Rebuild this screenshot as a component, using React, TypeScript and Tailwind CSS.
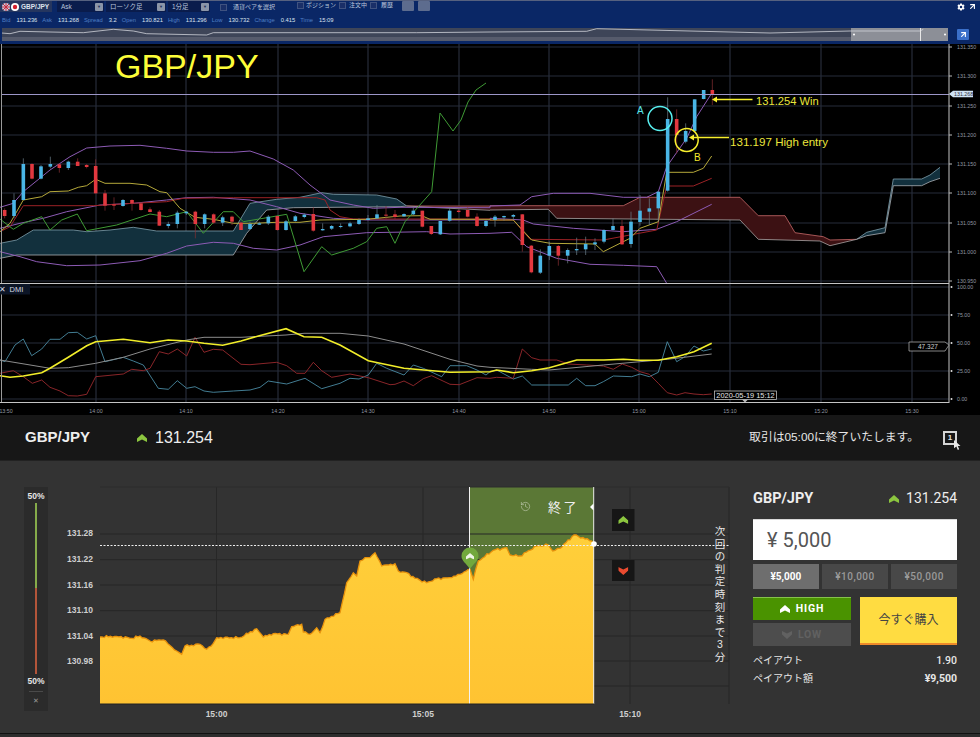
import { ArrowUpRight, History } from 'lucide-react';
import { IoSettingsSharp } from 'react-icons/io5';

const FONT = "font-['Liberation_Sans','Noto_Sans_CJK_JP',sans-serif]";

// traced points are in crop coords (3x), ox/oy put them back on the page
const toPage = (pts: number[], ox: number, oy: number) => {
  const out: string[] = [];
  for (let i = 0; i < pts.length; i += 2) {
    out.push(`${(pts[i] / 3 + ox).toFixed(1)},${(pts[i + 1] / 3 + oy).toFixed(1)}`);
  }
  return out;
};
const LEFT = (pts: number[]) => toPage(pts, 0, 120);
const RIGHT = (pts: number[]) => toPage(pts, 490, 70);
const DL = (pts: number[]) => toPage(pts, 0, 280);
const DR = (pts: number[]) => toPage(pts, 490, 280);

const PRICE_LINES: { color: string; width?: number; pts: string[] }[] = [
  {
    color: '#8d5bb5',
    pts: [
      ...LEFT([0, 262, 40, 250, 70, 215, 150, 150, 210, 110, 260, 84, 330, 78, 420, 76, 500, 85, 560, 93, 640, 97, 700, 97, 750, 93, 820, 117, 880, 150, 930, 195, 990, 240, 1060, 255, 1120, 265, 1200, 262, 1470, 263]),
      ...RIGHT([0, 408, 90, 405, 125, 380, 190, 370, 300, 370, 400, 382, 470, 382, 505, 365, 530, 290, 590, 205, 620, 140, 665, 70]),
    ],
  },
  {
    color: '#8d5bb5',
    pts: [
      ...LEFT([0, 325, 60, 310, 130, 295, 200, 275, 300, 255, 400, 250, 500, 240, 560, 233, 640, 232, 750, 240, 830, 260, 900, 280, 1000, 295, 1100, 300, 1470, 300]),
      ...RIGHT([0, 445, 100, 450, 130, 462, 250, 475, 400, 485, 500, 478, 560, 455, 665, 403]),
    ],
  },
  {
    color: '#8d5bb5',
    pts: [
      ...LEFT([0, 395, 60, 410, 110, 425, 200, 437, 300, 435, 420, 422, 500, 400, 560, 378, 640, 367, 700, 370, 760, 385, 830, 390, 900, 375, 970, 350, 1100, 338, 1280, 335, 1350, 342, 1470, 340]),
      ...RIGHT([0, 490, 65, 487, 110, 530, 200, 565, 300, 583, 400, 586, 500, 590, 530, 640]),
    ],
  },
  {
    color: '#9c2226',
    pts: [
      ...LEFT([0, 335, 30, 320, 70, 257, 280, 257, 400, 250, 500, 245, 550, 235, 700, 233, 950, 233, 975, 240, 990, 270, 1020, 290, 1060, 297, 1470, 297]),
      ...RIGHT([0, 450, 70, 450, 120, 508, 340, 510, 500, 480, 530, 348, 610, 348, 665, 325]),
    ],
  },
  {
    color: '#b5a83a',
    pts: [
      ...LEFT([0, 335, 30, 310, 70, 240, 125, 230, 150, 215, 205, 213, 235, 202, 260, 197, 287, 178, 315, 190, 390, 190, 440, 195, 480, 215, 500, 218, 540, 265, 585, 292, 640, 298, 700, 310, 760, 310, 830, 307, 900, 307, 960, 300, 1100, 298, 1200, 288, 1265, 287, 1290, 298, 1470, 298]),
      ...RIGHT([0, 450, 70, 450, 125, 510, 180, 520, 315, 522, 340, 545, 420, 505, 450, 475, 505, 455, 530, 307, 610, 307, 640, 295, 665, 258]),
    ],
  },
  {
    color: '#3f9a35',
    pts: [
      ...LEFT([0, 297, 40, 328, 70, 310, 125, 290, 150, 330, 185, 300, 232, 282, 260, 332, 350, 315, 450, 282, 500, 290, 560, 275, 610, 340, 670, 275, 700, 275, 730, 305, 860, 283, 912, 455, 965, 380, 995, 405, 1060, 385, 1100, 365, 1130, 325, 1160, 320, 1185, 370, 1215, 305, 1295, 215]),
      '440,113',
      '453,131',
      '461,120',
      '468,102',
      '476,90',
      '486,83',
    ],
  },
];

const TEAL_TOP = [0, 370, 50, 360, 100, 330, 220, 330, 260, 335, 330, 330, 400, 322, 470, 333, 700, 333, 750, 250, 830, 238, 900, 232, 965, 218, 1000, 223, 1130, 225, 1190, 237, 1220, 258];
const TEAL_BOTTOM = [1220, 258, 1200, 260, 880, 263, 800, 270, 740, 340, 700, 405, 50, 405, 0, 415];
const RED_TOP = [0, 407, 400, 407, 450, 382, 750, 382, 805, 437, 885, 437, 915, 488, 1000, 500, 1020, 510, 1100, 508];
const RED_BOTTOM = [1100, 508, 1020, 527, 990, 513, 805, 508, 750, 450, 200, 445, 175, 418, 0, 420];
const TEAL2_TOP = [1100, 508, 1130, 487, 1185, 473, 1210, 327, 1295, 327, 1320, 315, 1350, 292];
const TEAL2_BOTTOM = [1350, 325, 1320, 335, 1295, 347, 1210, 347, 1185, 488, 1130, 497, 1100, 508];
// thin start of the red cloud, before the right hand crop begins
const RED_START_TOP = [1220, 258, 1470, 258];
const RED_START_BOTTOM = [1470, 271, 1290, 262, 1220, 258];

// x, wickTop, wickBottom, bodyTop, bodyBottom, up
type Candle = [number, number, number, number, number, boolean];
const CANDLES_L: Candle[] = [
  [14, 265, 295, 270, 288, false], [42, 220, 295, 240, 288, true], [70, 115, 240, 132, 240, true], [96, 130, 178, 132, 176, false],
  [123, 135, 178, 139, 176, true], [151, 110, 145, 132, 140, true], [178, 130, 158, 133, 144, false], [205, 122, 150, 125, 144, true],
  [233, 115, 138, 125, 138, false], [260, 132, 145, 135, 141, false], [287, 118, 220, 138, 220, false], [315, 210, 272, 220, 257, false],
  [342, 232, 270, 253, 257, false], [369, 237, 260, 240, 258, true], [396, 238, 272, 240, 250, false], [423, 248, 272, 250, 270, false],
  [450, 262, 277, 268, 276, false], [478, 270, 318, 275, 317, false], [505, 305, 325, 312, 318, true], [532, 272, 325, 278, 312, true],
  [559, 275, 285, 275, 280, true], [586, 272, 355, 275, 312, false], [614, 280, 325, 283, 312, true], [641, 280, 312, 283, 308, false],
  [668, 287, 318, 292, 308, true], [696, 287, 315, 290, 305, false], [723, 305, 330, 308, 330, false], [750, 305, 330, 312, 327, true],
  [778, 305, 315, 310, 314, true], [805, 285, 315, 290, 310, true], [832, 288, 332, 288, 330, false], [858, 300, 332, 304, 330, true],
  [886, 285, 305, 289, 303, true], [913, 280, 295, 284, 291, true], [940, 262, 335, 282, 332, false], [968, 310, 332, 327, 331, true],
  [995, 315, 330, 318, 326, true], [1022, 310, 325, 318, 320, true], [1050, 305, 322, 310, 319, true], [1077, 295, 315, 300, 312, true],
  [1104, 285, 300, 295, 300, true], [1131, 255, 297, 283, 295, true], [1158, 258, 297, 284, 286, false], [1185, 270, 298, 283, 291, false],
  [1212, 280, 290, 282, 289, true], [1240, 262, 285, 272, 283, true], [1267, 272, 322, 272, 320, false], [1294, 318, 345, 318, 342, false],
  [1321, 303, 345, 303, 343, true], [1349, 262, 305, 272, 302, true], [1376, 268, 278, 272, 276, false], [1403, 262, 292, 270, 290, false],
  [1431, 280, 320, 290, 318, false], [1458, 300, 322, 303, 318, true],
];
const CANDLES_R: Candle[] = [
  [15, 435, 470, 440, 450, true], [42, 437, 452, 438, 442, true], [70, 432, 450, 435, 440, true], [97, 432, 545, 433, 525, false],
  [124, 525, 610, 527, 607, false], [151, 538, 612, 557, 608, true], [178, 515, 570, 528, 557, true], [205, 525, 587, 528, 557, false],
  [233, 535, 580, 540, 557, true], [260, 503, 555, 537, 541, true], [287, 500, 555, 522, 538, true], [315, 505, 540, 517, 523, true],
  [342, 478, 520, 480, 515, true], [369, 445, 482, 468, 480, true], [396, 450, 525, 468, 523, false], [423, 425, 533, 455, 522, true],
  [450, 375, 467, 422, 456, true], [478, 385, 465, 415, 425, true], [505, 365, 455, 365, 415, true], [533, 82, 365, 147, 362, true],
  [560, 118, 250, 147, 195, false], [587, 160, 220, 183, 215, true], [614, 88, 185, 88, 183, true], [641, 60, 88, 60, 87, true],
  [667, 28, 105, 60, 72, false],
];

const DMI_LINES: { color: string; width: number; pts: string[] }[] = [
  {
    color: '#4a8aa3',
    width: 0.9,
    pts: [
      ...DL([0, 240, 15, 245, 45, 195, 70, 177, 95, 227, 125, 207, 150, 178, 180, 178, 205, 158, 232, 157, 260, 177, 287, 167, 315, 245, 370, 232, 400, 243, 430, 255, 475, 325, 505, 328, 532, 302, 560, 325, 585, 320, 612, 333, 640, 337, 700, 333, 750, 330, 780, 322, 805, 303, 860, 312, 915, 295, 965, 326, 1020, 310, 1050, 295, 1077, 297, 1105, 285, 1130, 250, 1160, 265, 1212, 285, 1240, 255, 1270, 265, 1325, 290, 1350, 257, 1400, 257, 1431, 270, 1458, 285, 1470, 275]),
      ...DR([20, 270, 70, 297, 97, 288, 125, 315, 235, 315, 260, 295, 287, 317, 315, 317, 340, 305, 370, 288, 425, 290, 450, 282, 478, 290, 505, 277, 532, 185, 560, 245, 585, 230, 612, 198, 640, 213, 665, 207]),
    ],
  },
  {
    color: '#98292e',
    width: 0.9,
    pts: [
      ...DL([0, 280, 40, 272, 70, 290, 97, 310, 125, 300, 150, 322, 180, 333, 205, 347, 232, 348, 260, 343, 287, 290, 370, 282, 395, 268, 430, 272, 450, 265, 478, 215, 505, 222, 532, 207, 560, 228, 585, 172, 612, 217, 640, 208, 668, 210, 696, 232, 723, 253, 750, 254, 830, 247, 860, 257, 890, 280, 915, 280, 940, 247, 965, 272, 995, 292, 1050, 282, 1105, 293, 1170, 314, 1185, 313, 1212, 303, 1240, 317, 1270, 296, 1295, 287, 1350, 313, 1378, 314, 1431, 293, 1470, 295]),
      ...DR([20, 292, 70, 295, 97, 207, 125, 233, 150, 240, 200, 240, 235, 252, 290, 255, 340, 258, 370, 268, 397, 252, 425, 262, 450, 275, 478, 283, 505, 310, 532, 338, 560, 345, 585, 338, 612, 342, 640, 344, 665, 342]),
    ],
  },
  {
    color: '#8c8c8c',
    width: 1,
    pts: [
      ...DL([0, 240, 60, 250, 150, 265, 205, 263, 287, 250, 370, 232, 450, 207, 560, 180, 612, 172, 723, 172, 858, 165, 912, 160, 1020, 160, 1105, 168, 1212, 192, 1350, 238, 1431, 258, 1470, 262]),
      ...DR([125, 268, 178, 270, 340, 255, 450, 245, 532, 238, 665, 222]),
    ],
  },
  {
    color: '#f2ee2a',
    width: 1.6,
    pts: [
      ...DL([0, 287, 30, 292, 70, 288, 125, 278, 150, 265, 205, 232, 260, 197, 287, 185, 370, 178, 450, 188, 505, 180, 560, 183, 612, 190, 668, 196, 723, 183, 778, 167, 858, 146, 912, 170, 965, 172, 1020, 195, 1105, 242, 1212, 265, 1350, 277, 1470, 275]),
      ...DR([20, 270, 70, 278, 125, 272, 178, 263, 260, 240, 342, 240, 400, 238, 450, 241, 505, 241, 560, 230, 612, 215, 665, 190]),
    ],
  },
];

const AREA_TRACE = [
  ...toPage([300, 528, 350, 526, 395, 532, 420, 525, 450, 540, 490, 537, 530, 570, 545, 580, 555, 555, 600, 550, 620, 565, 640, 547, 650, 530, 720, 530, 770, 503, 790, 528, 820, 518, 865, 520, 875, 497, 905, 490, 910, 513, 930, 520, 950, 500, 960, 515, 975, 475, 1020, 455, 1040, 365, 1060, 335, 1070, 345, 1080, 300, 1095, 290, 1110, 290], 0, 460),
  ...toPage([15, 245, 35, 285, 75, 278, 85, 300, 110, 305, 135, 322, 170, 335, 200, 323, 245, 320, 270, 310, 300, 295, 310, 325, 325, 270, 370, 238, 410, 230, 420, 252, 450, 255, 500, 225, 535, 222, 548, 240, 570, 232, 612, 192, 665, 210, 672, 218], 370, 470),
];

// the tick line is jagged, so roughen the trace a little between its points
const roughen = (trace: string[]) => {
  const pairs = trace.map((p) => p.split(',').map(Number));
  const out: string[] = [];
  pairs.forEach(([x, y], i) => {
    out.push(`${x},${y}`);
    const next = pairs[i + 1];
    if (!next) return;
    const steps = Math.floor((next[0] - x) / 2);
    for (let s = 1; s < steps; s++) {
      const t = s / steps;
      const px = x + (next[0] - x) * t;
      const wobble = Math.sin(px * 1.7) * 0.7 + Math.sin(px * 0.63) * 0.5;
      out.push(`${px.toFixed(1)},${(y + (next[1] - y) * t + wobble).toFixed(1)}`);
    }
  });
  return out;
};
const AREA = roughen(AREA_TRACE);

const GRID_X = [96, 186, 278, 368, 459, 549, 639, 730, 821, 912];
const PRICE_TICKS: [number, string][] = [
  [47, '131.350'], [76, '131.300'], [106, '131.250'], [135, '131.200'], [164, '131.150'], [193, '131.100'], [223, '131.050'], [252, '131.000'], [281, '130.950'],
];
const DMI_TICKS: [number, string][] = [[287, '100.00'], [315, '75.00'], [343, '50.00'], [371, '25.00'], [399, '0.00']];
const TIME_TICKS: [number, string][] = [
  [6, '13:50'], [96, '14:00'], [186, '14:10'], [278, '14:20'], [368, '14:30'], [459, '14:40'], [549, '14:50'], [639, '15:00'], [730, '15:10'], [821, '15:20'], [912, '15:30'],
];

const STATS: [string, string][] = [
  ['Bid', '131.236'], ['Ask', '131.268'], ['Spread', '3.2'], ['Open', '130.821'], ['High', '131.296'], ['Low', '130.732'], ['Change', '0.415'], ['Time', '15:09'],
];

function Chevron({ up, color, width, className, x, y }: { up: boolean; color: string; width: number; className?: string; x?: number; y?: number }) {
  return (
    <svg x={x} y={y} width={width} height={width * 0.8} viewBox="0 0 10 8" className={className}>
      <polygon points={up ? '0,8 0,4.5 5,0 10,4.5 10,8 5,5.5' : '0,0 0,3.5 5,8 10,3.5 10,0 5,2.5'} fill={color} />
    </svg>
  );
}

function SelectBox({ label, width }: { label: string; width: string }) {
  return (
    <div className={`flex h-[11px] items-center justify-between bg-[#0a1c4c] pl-[4px] pr-[1px] text-[6.5px] text-[#b9c4da] ${width}`}>
      <span>{label}</span>
      <span className="flex h-[8px] w-[8px] items-center justify-center rounded-[1px] bg-[#8b95a8] text-[4px] leading-none text-[#1a2a55]">▼</span>
    </div>
  );
}

function CheckLabel({ label, className }: { label: string; className?: string }) {
  return (
    <div className={`flex items-center ${className ?? ''}`}>
      <span className="h-[7px] w-[7px] shrink-0 border border-[#3f5280] bg-[#1a2f68]" />
      <span className="text-[6px] leading-[8px] text-[#b9c4da]">{label}</span>
    </div>
  );
}

function Toolbar() {
  return (
    <div className="h-[44px] bg-[#0a2766]">
      <div className="flex h-[13px] items-start border-t border-[#56617f]">
        <div className="flex h-[11px] w-[52px] items-center gap-[1px] bg-[#25365f] pl-[2px]">
          <svg width="8" height="8" viewBox="0 0 8 8">
            <circle cx="4" cy="4" r="4" fill="#c9cfe0" />
            <path d="M1 1 7 7M7 1 1 7M4 0v8M0 4h8" stroke="#c8283c" strokeWidth="1" />
          </svg>
          <svg width="8" height="8" viewBox="0 0 8 8">
            <circle cx="4" cy="4" r="4" fill="#fff" />
            <circle cx="4" cy="4" r="2.2" fill="#d31f2f" />
          </svg>
          <span className="ml-[1px] text-[6.5px] font-bold text-[#dfe4ee]">GBP/JPY</span>
        </div>
        <div className="ml-[5px] flex gap-[2px]">
          <SelectBox label="Ask" width="w-[47px]" />
          <SelectBox label="ローソク足" width="w-[60px]" />
          <SelectBox label="1分足" width="w-[42px]" />
        </div>
        <CheckLabel label="通貨ペアを選択" className="ml-[10px] mt-[2px] gap-[6px]" />
        <CheckLabel label="ポジション" className="ml-[22px] gap-[2px]" />
        <CheckLabel label="注文中" className="ml-[3px] gap-[3px]" />
        <CheckLabel label="履歴" className="ml-[3px] gap-[4px]" />
        <span className="ml-[9px] h-[10px] w-[12px] rounded-[1px] bg-[#5d6c8e]" />
        <span className="ml-[4px] h-[10px] w-[12px] rounded-[1px] bg-[#5d6c8e]" />
        <div className="ml-auto mr-[3px] flex items-center gap-[3px] pt-[1px] text-white">
          <IoSettingsSharp size={8} />
          <ArrowUpRight size={9} strokeWidth={3} />
        </div>
      </div>
      <div className="flex h-[15px] items-center gap-[5px] pl-[2px] text-[5.8px] leading-none">
        {STATS.map(([name, value]) => (
          <div key={name} className="flex gap-[6px]">
            <span className="text-[#4f7fc4]">{name}</span>
            <span className="text-[#dde3ee]">{value}</span>
          </div>
        ))}
      </div>
      <div className="flex items-center pl-[2px]">
        <svg width="946" height="13" viewBox="0 0 946 13" className="block">
          <rect width="946" height="13" fill="#3e4558" />
          <rect y="9" width="946" height="4" fill="#565b6c" />
          <rect x="849" width="97" height="13" fill="#8c8f97" />
          <polyline
            fill="none"
            stroke="#d0d3da"
            strokeWidth="0.8"
            points={toPage([5, 15, 30, 17, 60, 10, 150, 12, 250, 14, 340, 4, 400, 9, 440, 17, 620, 21, 640, 14, 1250, 14, 1470, 12, 1760, 10, 1790, 2, 2310, 15, 2550, 9, 2760, 9, 2770, 4], -2, 0).join(' ')}
          />
          <rect x="918" y="0" width="1" height="13" fill="#e8e8e8" />
          <circle cx="852" cy="6.5" r="1" fill="#fff" />
          <circle cx="943" cy="6.5" r="1" fill="#fff" />
        </svg>
        <span className="ml-[9px] flex h-[11px] w-[12px] items-center justify-center rounded-[1px] bg-[#3a6fc9] text-white">
          <ArrowUpRight size={9} strokeWidth={3} />
        </span>
      </div>
    </div>
  );
}

function MainChart() {
  const allCandles = [
    ...CANDLES_L.map((c) => ({ c, ox: 0, oy: 120 })),
    ...CANDLES_R.map((c) => ({ c, ox: 490, oy: 70 })),
  ];
  return (
    <svg width="980" height="371" viewBox="0 44 980 371" className="block bg-black">
      {GRID_X.map((x) => (
        <line key={x} x1={x} x2={x} y1={44} y2={402} stroke="#2f3444" strokeWidth="1" />
      ))}
      {PRICE_TICKS.map(([y]) => (
        <line key={y} x1={1} x2={949} y1={y} y2={y} stroke="#272c3a" strokeWidth="1" />
      ))}
      {DMI_TICKS.map(([y]) => (
        <line key={y} x1={1} x2={949} y1={y} y2={y} stroke="#272c3a" strokeWidth="1" />
      ))}

      <polygon points={[...LEFT(TEAL_TOP), ...LEFT(TEAL_BOTTOM)].join(' ')} fill="#12303d" />
      <polyline points={LEFT(TEAL_TOP).join(' ')} fill="none" stroke="#7fa0ad" strokeWidth="0.8" />
      <polyline points={LEFT(TEAL_BOTTOM).join(' ')} fill="none" stroke="#a9adb3" strokeWidth="0.8" />
      <polygon points={[...LEFT(RED_START_TOP), ...LEFT(RED_START_BOTTOM)].join(' ')} fill="#3c1113" />
      <polyline points={LEFT(RED_START_TOP).join(' ')} fill="none" stroke="#c96a6a" strokeWidth="0.8" />
      <polyline points={LEFT(RED_START_BOTTOM).join(' ')} fill="none" stroke="#a9a5a5" strokeWidth="0.8" />
      <polygon points={[...RIGHT(RED_TOP), ...RIGHT(RED_BOTTOM)].join(' ')} fill="#3c1113" />
      <polyline points={RIGHT(RED_TOP).join(' ')} fill="none" stroke="#c96a6a" strokeWidth="0.8" />
      <polyline points={RIGHT(RED_BOTTOM).join(' ')} fill="none" stroke="#a9a5a5" strokeWidth="0.8" />
      <polygon points={[...RIGHT(TEAL2_TOP), ...RIGHT(TEAL2_BOTTOM)].join(' ')} fill="#12303d" />
      <polyline points={RIGHT(TEAL2_TOP).join(' ')} fill="none" stroke="#7fa0ad" strokeWidth="0.8" />
      <polyline points={RIGHT(TEAL2_BOTTOM).join(' ')} fill="none" stroke="#a9adb3" strokeWidth="0.8" />

      {PRICE_LINES.map((l, i) => (
        <polyline key={i} points={l.pts.join(' ')} fill="none" stroke={l.color} strokeWidth={l.width ?? 1} />
      ))}

      {allCandles.map(({ c, ox, oy }, i) => {
        const [x, wt, wb, bt, bb, up] = c;
        const px = x / 3 + ox;
        const color = up ? '#4ab6e6' : '#e2383f';
        return (
          <g key={i}>
            <line x1={px} x2={px} y1={wt / 3 + oy} y2={wb / 3 + oy} stroke={up ? '#6b7f8c' : '#8a2f33'} strokeWidth="0.7" />
            <rect x={px - 1.8} y={bt / 3 + oy} width="3.6" height={Math.max((bb - bt) / 3, 1)} fill={color} />
          </g>
        );
      })}

      <line x1={2} x2={949} y1={94.5} y2={94.5} stroke="#9c96c8" strokeWidth="1" />

      {DMI_LINES.map((l, i) => (
        <polyline key={i} points={l.pts.join(' ')} fill="none" stroke={l.color} strokeWidth={l.width} />
      ))}

      <line x1={1.5} x2={1.5} y1={44} y2={403} stroke="#9a9a9a" strokeWidth="1" />
      <line x1={949} x2={949} y1={44} y2={403} stroke="#c4c4c4" strokeWidth="1" />
      <line x1={0} x2={949} y1={283.5} y2={283.5} stroke="#c4c4c4" strokeWidth="1" />
      <line x1={0} x2={949} y1={402.5} y2={402.5} stroke="#c4c4c4" strokeWidth="1" />

      {PRICE_TICKS.map(([y, label]) => (
        <g key={label}>
          <line x1={949} x2={952} y1={y} y2={y} stroke="#bbb" />
          <text x={957} y={y + 2} fontSize="5.3" fill="#9298a2">{label}</text>
        </g>
      ))}
      {DMI_TICKS.map(([y, label]) => (
        <g key={label}>
          <circle cx={951.5} cy={y} r={1} fill="#ddd" />
          <text x={957} y={y + 2} fontSize="5.3" fill="#9298a2">{label}</text>
        </g>
      ))}
      {TIME_TICKS.map(([x, label]) => (
        <text key={label} x={x} y={413} fontSize="5.3" fill="#9298a2" textAnchor="middle">{label}</text>
      ))}

      <polygon points="949,94 953,90.7 973,90.7 973,97.3 953,97.3" fill="#cfe3f5" />
      <text x={954} y={96} fontSize="5.3" fill="#334">131.268</text>

      <polygon points="909,342 945,342 949,345 945,351 909,351" fill="#000" stroke="#bbb" strokeWidth="0.7" />
      <text x={918} y={349} fontSize="6.5" fill="#cfcfcf">47.327</text>

      <rect x={714.5} y={391} width={62} height={8.5} fill="#000" stroke="#bbb" strokeWidth="0.8" />
      <text x={745.5} y={398} fontSize="7.4" fill="#e6e6e6" textAnchor="middle">2020-05-19 15:12</text>
      <polygon points="742,399.5 748,399.5 745,402.5" fill="#bbb" />

      <rect x={0} y={284} width={30} height={10.5} fill="#0c1526" />
      <text x={-1} y={292} fontSize="8" fill="#d5d8e0">✕</text>
      <text x={9.5} y={292} fontSize="7.5" fill="#d5d8e0">DMI</text>

      <text x={115} y={78} fontSize="34" fill="#fdfd38">GBP/JPY</text>

      <circle cx={660} cy={118.5} r={12} fill="none" stroke="#58f0f0" strokeWidth="1.5" />
      <text x={637} y={114} fontSize="10" fill="#58e6ea">A</text>
      <circle cx={686.7} cy={140} r={11.5} fill="none" stroke="#f7ef2e" strokeWidth="1.5" />
      <text x={694} y={161} fontSize="10" fill="#f2e92c">B</text>

      <line x1={716} x2={752.5} y1={99.5} y2={99.5} stroke="#f7ef2e" strokeWidth="1.5" />
      <polygon points="712,99.5 717,96.5 717,102.5" fill="#f7ef2e" />
      <text x={756} y={105} fontSize="11.2" fill="#ebe53c">131.254 Win</text>
      <line x1={693} x2={729} y1={137.5} y2={137.5} stroke="#f7ef2e" strokeWidth="1.5" />
      <polygon points="689,137.5 694,134.5 694,140.5" fill="#f7ef2e" />
      <text x={730} y={146} fontSize="11.6" fill="#ebe53c">131.197 High entry</text>
    </svg>
  );
}

function HeaderBar() {
  return (
    <div className="flex h-[45px] items-center bg-[#171717] pl-[25px] pr-[23px]">
      <span className="text-[15px] font-bold text-[#eee]">GBP/JPY</span>
      <Chevron up color="#8cc63f" width={10} className="ml-[47px]" />
      <span className="ml-[8px] text-[16px] text-[#eee]">131.254</span>
      <span className="ml-auto text-[11.8px] text-[#e6e6e6]">取引は05:00に終了いたします。</span>
      <span className="relative ml-[24px] flex h-[14px] w-[14px] items-center justify-center border-2 border-[#d5d5d5] text-[8px] font-bold leading-none text-[#e6e6e6]">
        1
        <svg width="7" height="10" viewBox="0 0 7 10" className="absolute left-[9px] top-[7px]">
          <path d="M0 0 6.5 6 3.8 6 5.2 9.2 3.8 10 2.4 6.6 0 8.2Z" fill="#e8e8e8" />
        </svg>
      </span>
    </div>
  );
}

function Sentiment() {
  return (
    <div className="mt-[26px] flex h-[224px] w-[24px] shrink-0 flex-col items-center bg-[#2b2b2b] text-[8.5px] font-bold text-[#e6e6e6]">
      <span className="mt-[4px] leading-[10px]">50%</span>
      <span className="mt-[2px] h-[85px] w-[2px] bg-[#85ab4a]" />
      <span className="h-[86px] w-[2px] bg-[#b3553a]" />
      <span className="mt-[2px] leading-[10px]">50%</span>
      <span className="mt-[5px] h-[1px] w-[14px] bg-[#4a4a4a]" />
      <span className="mt-[4px] text-[7px] font-normal text-[#999]">✕</span>
    </div>
  );
}

function RateChart() {
  const hLines = [533, 558.7, 584, 609.7, 635, 660, 685];
  const yLabels: [number, string][] = [[535, '131.28'], [561, '131.22'], [587, '131.16'], [612, '131.10'], [638, '131.04'], [663, '130.98']];
  const xLabels: [number, string][] = [[216.5, '15:00'], [423, '15:05'], [630, '15:10']];
  const vertical = '次回の判定時刻まで3分'.split('');
  const areaPath = `100,703 ${AREA.join(' ')} 594,703`;
  return (
    <svg width="670" height="265" viewBox="60 460 670 265" className="ml-[12px] block shrink-0">
      <defs>
        <linearGradient id="area" x1="0" y1="0" x2="0" y2="1">
          <stop offset="0" stopColor="#ffcf3a" />
          <stop offset="1" stopColor="#ffc332" />
        </linearGradient>
      </defs>
      <rect x={100} y={486} width={629} height={217} fill="#333" />
      <rect x={469.5} y={486} width={124.5} height={217} fill="#5b7836" />
      {hLines.map((y) => (
        <line key={y} x1={100} x2={729} y1={y} y2={y} stroke="#272727" strokeWidth="1" />
      ))}
      {[216.5, 423, 630, 729].map((x) => (
        <line key={x} x1={x} x2={x} y1={486} y2={703} stroke="#272727" strokeWidth="1" />
      ))}
      <line x1={100} x2={729} y1={486} y2={486} stroke="#2c2c2c" />
      <polygon points={areaPath} fill="url(#area)" />
      <polyline points={AREA.join(' ')} fill="none" stroke="#e8920c" strokeWidth="1.3" />
      <line x1={100} x2={729} y1={544.5} y2={544.5} stroke="#eee" strokeWidth="1" strokeDasharray="2 1.5" />
      <line x1={469.5} x2={469.5} y1={486} y2={703} stroke="#f2f2f2" strokeWidth="1" />
      <line x1={593.7} x2={593.7} y1={486} y2={703} stroke="#e8e8e8" strokeWidth="1" />
      <line x1={100} x2={594} y1={703} y2={703} stroke="#222" strokeWidth="1" />

      <History x={520} y={500} width={11} height={11} color="#b9c4a6" strokeWidth={1.5} />
      <text x={548} y={511} fontSize="13" fill="#eee" letterSpacing="2.5">終了</text>
      <polygon points="590,506 593.5,502.5 593.5,509.5" fill="#fff" />
      <circle cx={594} cy={543} r={2.8} fill="#fff" />

      <path d="M470 568 C466 562 461.5 560 461.5 555 A8.5 8.5 0 0 1 478.5 555 C478.5 560 474 562 470 568Z" fill="#72a83d" />
      <Chevron up color="#eef3e6" width={8} x={466} y={552} />

      <rect x={612} y={508} width={22.5} height={22} fill="#161616" />
      <Chevron up color="#8cc63f" width={10} x={618.3} y={515} />
      <rect x={612} y={559} width={22.5} height={21} fill="#161616" />
      <Chevron up={false} color="#ea4b30" width={10} x={618.3} y={566} />

      {yLabels.map(([y, t]) => (
        <text key={t} x={93} y={y} fontSize="8.5" fontWeight="700" fill="#cfcfcf" textAnchor="end">{t}</text>
      ))}
      {xLabels.map(([x, t]) => (
        <text key={t} x={x} y={716} fontSize="8.5" fontWeight="700" fill="#cfcfcf" textAnchor="middle">{t}</text>
      ))}
      {vertical.map((ch, i) => (
        <text key={i} x={720} y={534 + i * 12.6} fontSize="10.5" fill="#e6e6e6" textAnchor="middle">{ch}</text>
      ))}
    </svg>
  );
}

function BuyPanel() {
  return (
    <div className="ml-[23px] mt-[28px] flex w-[204px] shrink-0 flex-col font-['Roboto','Noto_Sans_CJK_JP',sans-serif]">
      <div className="flex h-[19px] items-center text-[#eee]">
        <span className="text-[14.5px] font-bold">GBP/JPY</span>
        <Chevron up color="#8cc63f" width={10} className="ml-auto" />
        <span className="ml-[7px] text-[14px]">131.254</span>
      </div>
      <div className="mt-[11px] flex h-[41px] items-center border-t border-[#d8d8d8] bg-white pl-[14px] text-[20px] text-[#555]">¥ 5,000</div>
      <div className="mt-[4px] grid grid-cols-3 gap-[3.5px] text-[10px]">
        <button className="h-[25px] bg-[#6e6e6e] font-bold text-white">¥5,000</button>
        <button className="h-[25px] bg-[#484848] font-medium tracking-[0.5px] text-[#9a9a9a]">¥10,000</button>
        <button className="h-[25px] bg-[#484848] font-medium tracking-[0.5px] text-[#9a9a9a]">¥50,000</button>
      </div>
      <div className="mt-[8px] flex justify-between">
        <div className="flex w-[98px] flex-col gap-[3px]">
          <div className="flex h-[23px] items-center justify-center gap-[6px] border-t border-[#85c24a] bg-[#4a9300] text-[10.5px] font-bold tracking-[0.8px] text-white">
            <Chevron up color="#fff" width={10} />
            HIGH
          </div>
          <div className="flex h-[23px] items-center justify-center gap-[6px] bg-[#4d4d4d] text-[10.5px] font-bold tracking-[0.8px] text-[#616161]">
            <Chevron up={false} color="#616161" width={10} />
            LOW
          </div>
        </div>
        <button className="h-[48px] w-[97px] border-b-2 border-[#ee8a2a] bg-[#ffdc41] text-[12px] text-[#444]">今すぐ購入</button>
      </div>
      <div className="mt-[10px] flex flex-col gap-[8px] text-[10px] text-[#e6e6e6]">
        <div className="flex items-center justify-between leading-[10px]">
          <span>ペイアウト</span>
          <span className="text-[10.5px] font-medium">1.90</span>
        </div>
        <div className="flex items-center justify-between leading-[10px]">
          <span>ペイアウト額</span>
          <span className="text-[10.5px] font-bold">¥9,500</span>
        </div>
      </div>
    </div>
  );
}

export default function App() {
  return (
    <div className={`flex h-[737px] w-[980px] flex-col overflow-hidden bg-black ${FONT}`}>
      <Toolbar />
      <MainChart />
      <HeaderBar />
      <div className="flex h-[273px] shrink-0 items-start border-t border-[#222] bg-[#333] pl-[24px]">
        <Sentiment />
        <RateChart />
        <BuyPanel />
      </div>
      <div className="flex-1 border-t border-[#111] bg-[#2d2d2d]" />
    </div>
  );
}
